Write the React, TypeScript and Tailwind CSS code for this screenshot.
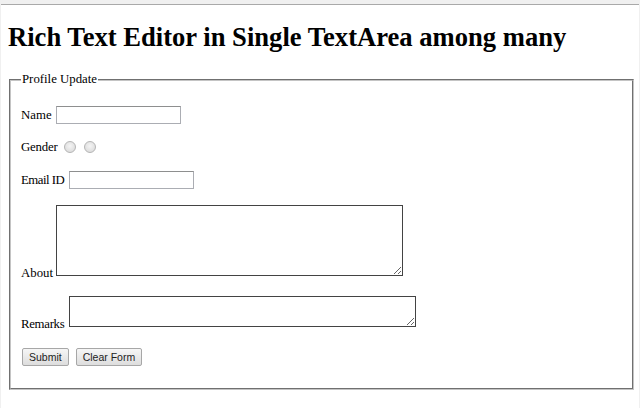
import React from 'react';

const serif = "font-['Liberation_Serif','Times_New_Roman',serif]";
const sans = "font-['Liberation_Sans',Arial,sans-serif]";

const TextBox = () => (
  <input
    type="text"
    className="h-[18px] w-[125px] border border-[#abadb3] border-t-[#8e8f8f] bg-white px-[2px] text-[12.8px] outline-none"
  />
);

const Radio = ({ name }: { name: string }) => (
  <input
    type="radio"
    name={name}
    className="h-[12px] w-[12px] appearance-none rounded-full border border-[#b5b5b5] bg-[radial-gradient(circle_at_50%_40%,#f4f4f4,#d6d6d6)]"
  />
);

const Button = ({ children }: { children: React.ReactNode }) => (
  <button
    type="button"
    className={`${sans} h-[18px] rounded-[2px] border border-[#a7a7a7] bg-gradient-to-b from-[#f6f6f6] to-[#dddddd] px-[6px] text-[10.5px] leading-none text-[#222]`}
  >
    {children}
  </button>
);

export default function App() {
  return (
    <div className={`${serif} h-[408px] w-[640px] overflow-hidden bg-[#f0f0f0] px-[1px] pt-[4px] text-black`}>
      <div className="h-full bg-white border-t border-[#a9a9a9] flex flex-col">
        <h1 className="ml-[7px] mt-[18px] text-[26.6px] font-bold leading-[28px]">
          Rich Text Editor in Single TextArea among many
        </h1>

        <fieldset className="ml-[8px] mr-[5px] mt-[21px] border-2 [border-style:groove] border-[#c4c4c4] px-[10px] pb-[22px]">
          <legend className="px-[1px] text-[12.8px] leading-[15px]">Profile Update</legend>

          <div className="flex flex-col pt-[19px] text-[12.8px] leading-[15px]">
            <div className="flex h-[18px] items-center">
              <label className="w-[35px]">Name</label>
              <TextBox />
            </div>

            <div className="mt-[14px] flex h-[18px] items-center">
              <span className="w-[43px] tracking-[-0.2px]">Gender</span>
              <div className="flex gap-[8px]">
                <Radio name="gender" />
                <Radio name="gender" />
              </div>
            </div>

            <div className="mt-[15px] flex h-[18px] items-center">
              <label className="w-[48px] whitespace-nowrap tracking-[-0.5px]">Email ID</label>
              <TextBox />
            </div>

            <div className="mt-[16px] flex items-end">
              <label className="w-[35px] -mb-[5px]">About</label>
              <textarea className="h-[71px] w-[347px] resize border border-[#434343] bg-white" />
            </div>

            <div className="mt-[20px] flex items-end">
              <label className="w-[48px] -mb-[5px] tracking-[-0.3px]">Remarks</label>
              <textarea className="h-[31px] w-[347px] resize border border-[#434343] bg-white" />
            </div>

            <div className="mt-[21px] flex gap-[7px] pl-[1px]">
              <Button>Submit</Button>
              <Button>Clear Form</Button>
            </div>
          </div>
        </fieldset>
      </div>
    </div>
  );
}
